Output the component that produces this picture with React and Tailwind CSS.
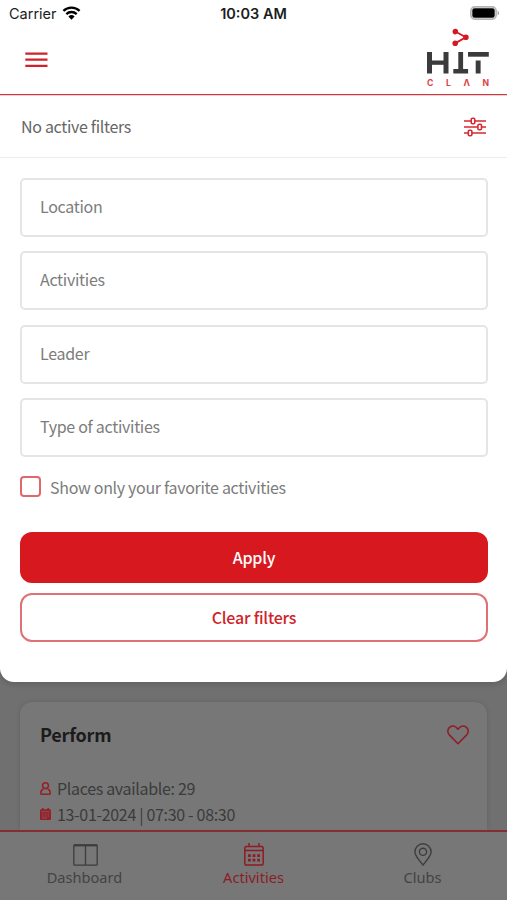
const FIELDS = ['Location', 'Activities', 'Leader', 'Type of activities'];

function StatusBar() {
  return (
    <div className="flex h-7 items-center justify-between pl-[9px] pr-[7px] font-['Inter',sans-serif] text-[14.5px] leading-7 text-[#1c1c1c]">
      <div className="flex w-40 items-center gap-[5px]">
        <span>Carrier</span>
        <svg className="mb-[2px]" width="19" height="14" viewBox="0 0 18 14" fill="none" stroke="#000" strokeWidth="2.3">
          <path d="M.9 4.9a11.6 11.6 0 0 1 16.2 0" />
          <path d="M3.8 8.1a7.5 7.5 0 0 1 10.4 0" />
          <path d="M9 13.7 5.9 10.5a4.5 4.5 0 0 1 6.2 0z" fill="#000" stroke="none" />
        </svg>
      </div>
      <span className="mr-[2px] font-semibold">10:03 AM</span>
      <div className="flex w-40 justify-end pb-[2px]">
        <svg width="30" height="14" viewBox="0 0 30 14">
          <rect x=".9" y=".9" width="25.2" height="12.2" rx="3.8" fill="#fff" stroke="#b4b4b4" strokeWidth="1.7" />
          <rect x="2.3" y="2.3" width="22.4" height="9.4" rx="2.2" fill="#000" />
          <path d="M27.6 4.6a2.6 2.6 0 0 1 0 4.8z" fill="#a9a9a9" />
        </svg>
      </div>
    </div>
  );
}

function Logo() {
  return (
    <div className="w-[62px]">
      <svg className="block" width="62" height="46" viewBox="0 0 62 46">
        <g stroke="#d8181f" strokeWidth="1.8" fill="#d8181f">
          <path d="M28.3 3.5 38.8 9.3 28 15.4" fill="none" />
          <circle cx="28.3" cy="3.6" r="1.9" />
          <circle cx="38.9" cy="9.3" r="1.9" />
          <circle cx="28.2" cy="15.3" r="1.9" />
        </g>
        <g fill="#3b3b3d">
          <rect x="0" y="24" width="5" height="21.5" />
          <rect x="5" y="32.5" width="12" height="4.3" />
          <rect x="16.5" y="24" width="5" height="21.5" />
          <rect x="31.3" y="24" width="4.8" height="17.5" />
          <rect x="26.3" y="41" width="14.8" height="4.5" />
          <rect x="41" y="24" width="20.8" height="4.7" />
          <rect x="48.7" y="32.5" width="4.9" height="13" />
        </g>
      </svg>
      <div className="mt-[5px] flex h-[9px] justify-between font-['Inter',sans-serif] text-[8.6px] font-bold leading-[9px] text-[#dc3f46]">
        <span>C</span>
        <span>L</span>
        <span>Λ</span>
        <span>N</span>
      </div>
    </div>
  );
}

function SlidersIcon() {
  return (
    <svg className="mt-px" width="22" height="20" viewBox="0 0 22 20" fill="none" stroke="#d62931" strokeWidth="1.6">
      <path d="M0 4h7.2M11 4H22M0 10h13.8M17.6 10H22M0 16h4.2M8 16H22" />
      <rect x="7.2" y="1.2" width="3.6" height="5.6" rx="1.3" />
      <rect x="13.9" y="7.2" width="3.6" height="5.6" rx="1.3" />
      <rect x="4.3" y="13.2" width="3.6" height="5.6" rx="1.3" />
    </svg>
  );
}

function FilterPanel() {
  return (
    <section className="h-[682px] rounded-b-[14px] bg-white shadow-[0_3px_5px_rgba(0,0,0,0.12)]">
      <StatusBar />
      <header className="flex h-[67px] justify-between border-b border-[#d0393f] pl-[25px] pr-[18px] shadow-[0_1px_0_#f3cfd0]">
        <svg className="mt-6" width="23" height="16" viewBox="0 0 23 16" stroke="#cf2229" strokeWidth="2.3">
          <path d="M.3 1.6h22.2M.3 7.7h22.2M.3 13.8h22.2" />
        </svg>
        <Logo />
      </header>

      <div className="flex h-[63px] items-center justify-between border-b border-[#ececec] pl-[21px] pr-[21px]">
        <span className="text-[16px] leading-6 tracking-[-0.32px] text-[#666]">No active filters</span>
        <SlidersIcon />
      </div>

      <div className="px-5 pt-5">
        <div className="flex flex-col gap-[14.3px]">
          {FIELDS.map((name) => (
            <div key={name} className="flex h-[59px] w-[468px] items-center rounded-[5px] border-2 border-[#e5e5e5] pb-[3px] pl-[18px] text-[16px] tracking-[-0.3px] text-[#7c7c7c]">
              {name}
            </div>
          ))}
        </div>

        <div className="mt-5 flex h-5 items-center gap-[9px]">
          <span className="h-[21px] w-[21px] rounded-[4px] border-2 border-[#e0686d]" />
          <span className="text-[16px] leading-6 tracking-[-0.31px] text-[#7c7c7c]">Show only your favorite activities</span>
        </div>

        <button type="button" className="mt-[35px] block h-[51px] w-[468px] rounded-[12px] bg-[#d7191f] pb-px text-[16px] font-medium tracking-[-0.2px] text-white">
          Apply
        </button>
        <button type="button" className="mt-[10px] block h-[49px] w-[468px] rounded-[12px] border-2 border-[#de7175] pb-px text-[16px] font-medium tracking-[-0.22px] text-[#cf2329]">
          Clear filters
        </button>
      </div>
    </section>
  );
}

function ActivityCard() {
  return (
    <article className="mx-5 mt-5 h-[128px] rounded-t-[12px] bg-[#777] px-5 pt-[19px] shadow-[0_0_5px_rgba(0,0,0,0.13)]">
      <div className="flex items-center justify-between">
        <h2 className="text-[18px] font-bold leading-[26px] tracking-[-0.2px] text-[#1b1b1b]">Perform</h2>
        <svg className="mr-[-2px] mt-px" width="22" height="20" viewBox="0 0 22 20" fill="none" stroke="#8f1f28" strokeWidth="1.6">
          <path d="M11 18.7 2.3 9.9C-.1 7.3.6 3.6 3 2 5.7.3 9 1.3 11 4.2 13 1.3 16.3.3 19 2c2.4 1.6 3.1 5.3.7 7.9z" strokeLinejoin="round" />
        </svg>
      </div>
      <div className="mt-[28px] flex h-[26px] items-center gap-[6px] text-[16px] tracking-[-0.32px] text-[#3b3b3b]">
        <svg width="11" height="13" viewBox="0 0 11 13" fill="none" stroke="#96202a" strokeWidth="1.5">
          <circle cx="5.5" cy="3.7" r="2.9" />
          <path d="M3.3 7.3C1.500 7.700.8 9 .8 10.700v.7q0 .8.8.8h7.800q.8 0 .8-.8v-.7c0-1.700-.7-3-2.500-3.400" />
        </svg>
        Places available: 29
      </div>
      <div className="flex h-[26px] items-center gap-[6px] text-[16px] tracking-[-0.32px] text-[#3b3b3b]">
        <svg width="11" height="12" viewBox="0 0 11 12">
          <path d="M2 0h1.600v1.200h3.800V0H9v1.200h1q1 0 1 1V11q0 1-1 1H1q-1 0-1-1V2.200q0-1 1-1h1z" fill="#96202a" />
          <path d="M1 3.700h9" stroke="#777" strokeWidth=".6" />
          <path d="M2 6h1.500M4.800 6h1.500M7.500 6H9M2 8h1.500M4.800 8h1.500M7.500 8H9M2 10h5" stroke="#777" strokeWidth=".7" />
        </svg>
        13-01-2024 | 07:30 - 08:30
      </div>
    </article>
  );
}

function DashboardIcon() {
  return (
    <svg className="ml-px" width="25" height="22" viewBox="0 0 25 22" fill="none" stroke="#3d3d3d" strokeWidth="1.3">
      <rect x=".8" y=".8" width="23.4" height="20.4" rx="1" />
      <path d="M12.5 1v20" />
      <path d="M.8 1.4h23.4" strokeWidth="2" />
    </svg>
  );
}

function CalendarIcon() {
  return (
    <svg width="20" height="23" viewBox="0 0 20 23" fill="none" stroke="#901b25" strokeWidth="1.5">
      <rect x=".8" y="3.4" width="18.4" height="18.6" rx="1.8" />
      <path d="M1 7.6h18M5 0v3.500M15 0v3.500" />
      <path d="M4 12.700h2.800M8.600 12.700h2.800M13.200 12.700h2.800M4 17.200h2.800M8.600 17.200h2.800M13.200 17.200h2.800" strokeWidth="2.700" />
    </svg>
  );
}

function PinIcon() {
  return (
    <svg width="18" height="23" viewBox="0 0 18 23" fill="none" stroke="#3d3d3d" strokeWidth="1.4">
      <path d="M9 22C5 17 .9 12.6.9 8.9a8.1 8.1 0 0 1 16.2 0C17.1 12.6 13 17 9 22z" />
      <circle cx="9" cy="8.8" r="3.6" />
    </svg>
  );
}

const TABS = [
  { label: 'Dashboard', Icon: DashboardIcon },
  { label: 'Activities', Icon: CalendarIcon, active: true },
  { label: 'Clubs', Icon: PinIcon },
];

export default function App() {
  return (
    <div className="flex h-[900px] w-[507px] flex-col overflow-hidden bg-[#707070] font-['Noto_Sans_CJK_SC',sans-serif]">
      <FilterPanel />
      <ActivityCard />
      <nav className="grid h-[70px] grid-cols-3 border-t-2 border-[#852e32] bg-[#777] font-['Noto_Sans',sans-serif]">
        {TABS.map(({ label, Icon, active }) => (
          <div key={label} className={`flex flex-col items-center pt-[11px] text-[14.6px] ${active ? 'text-[#8b1d29]' : 'text-[#434343]'}`}>
            <div className="flex h-[23px] items-center"><Icon /></div>
            <span className="mt-px leading-5">{label}</span>
          </div>
        ))}
      </nav>
    </div>
  );
}
